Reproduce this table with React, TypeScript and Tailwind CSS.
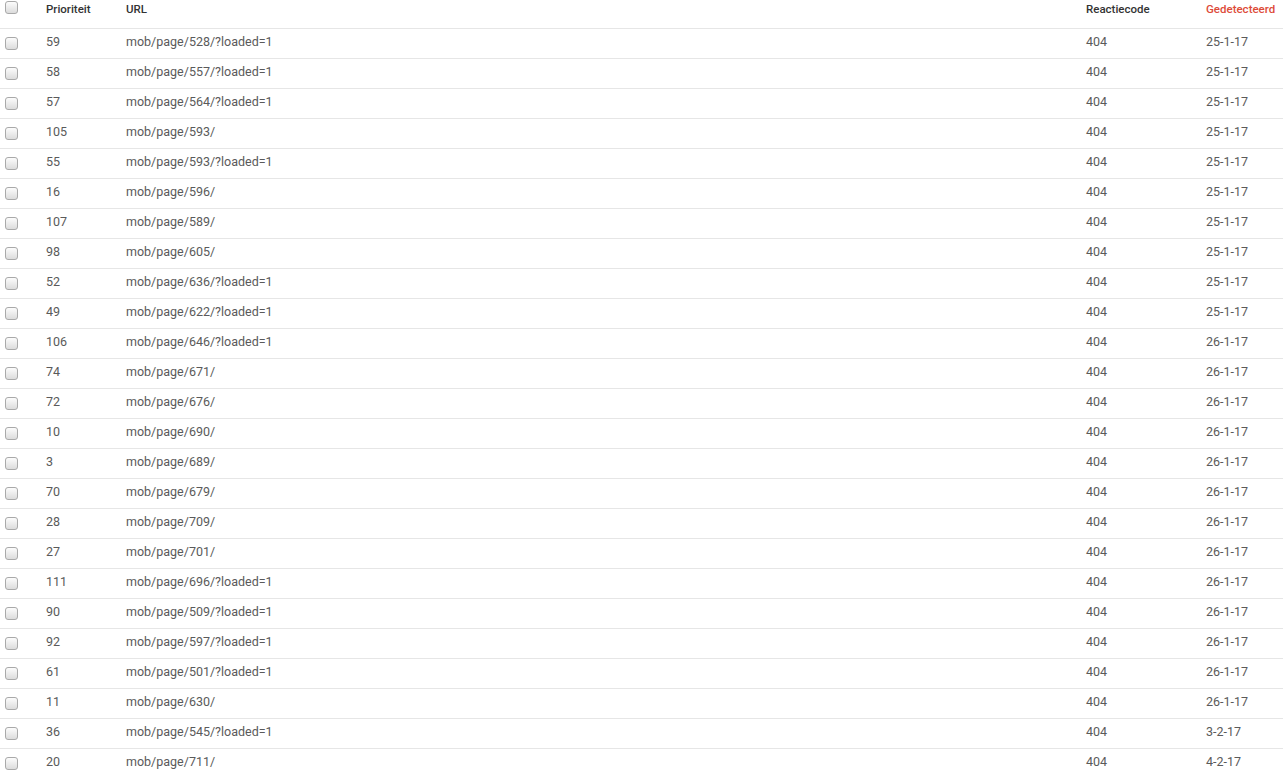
const rows: [string, string, string][] = [
  ["59", "mob/page/528/?loaded=1", "25-1-17"],
  ["58", "mob/page/557/?loaded=1", "25-1-17"],
  ["57", "mob/page/564/?loaded=1", "25-1-17"],
  ["105", "mob/page/593/", "25-1-17"],
  ["55", "mob/page/593/?loaded=1", "25-1-17"],
  ["16", "mob/page/596/", "25-1-17"],
  ["107", "mob/page/589/", "25-1-17"],
  ["98", "mob/page/605/", "25-1-17"],
  ["52", "mob/page/636/?loaded=1", "25-1-17"],
  ["49", "mob/page/622/?loaded=1", "25-1-17"],
  ["106", "mob/page/646/?loaded=1", "26-1-17"],
  ["74", "mob/page/671/", "26-1-17"],
  ["72", "mob/page/676/", "26-1-17"],
  ["10", "mob/page/690/", "26-1-17"],
  ["3", "mob/page/689/", "26-1-17"],
  ["70", "mob/page/679/", "26-1-17"],
  ["28", "mob/page/709/", "26-1-17"],
  ["27", "mob/page/701/", "26-1-17"],
  ["111", "mob/page/696/?loaded=1", "26-1-17"],
  ["90", "mob/page/509/?loaded=1", "26-1-17"],
  ["92", "mob/page/597/?loaded=1", "26-1-17"],
  ["61", "mob/page/501/?loaded=1", "26-1-17"],
  ["11", "mob/page/630/", "26-1-17"],
  ["36", "mob/page/545/?loaded=1", "3-2-17"],
  ["20", "mob/page/711/", "4-2-17"],
];

function Box() {
  return (
    <span className="block w-[13px] h-[13px] rounded-[3px] border border-[#a9a9a9] bg-gradient-to-b from-[#fcfcfc] to-[#dcdcdc]" />
  );
}

const cols = "grid grid-cols-[46px_80px_960px_120px_1fr]";

export default function App() {
  return (
    <div className="w-[1283px] h-[774px] overflow-hidden bg-white font-['Roboto',sans-serif]">
      {/* header */}
      <div className={`${cols} h-[29px] items-start pt-[1px] border-b border-[#e6e6e6] text-[11.5px] font-medium text-[#333]`}>
        <div className="pl-[5px]">
          <Box />
        </div>
        <div className="pt-[1px] leading-[14px]">Prioriteit</div>
        <div className="pt-[1px] leading-[14px]">URL</div>
        <div className="pt-[1px] leading-[14px]">Reactiecode</div>
        <div className="pt-[1px] leading-[14px] text-[#dd4b39]">Gedetecteerd</div>
      </div>

      {rows.map(([prio, url, date], i) => (
        <div
          key={i}
          className={`${cols} h-[30px] items-center border-b border-[#e6e6e6] text-[12.5px] leading-[16px] text-[#5a5a5a]`}
        >
          <div className="pl-[5px] pb-[1px]">
            <Box />
          </div>
          <div className="pb-[3px]">{prio}</div>
          <div className="pb-[3px]">{url}</div>
          <div className="pb-[3px]">404</div>
          <div className="pb-[3px]">{date}</div>
        </div>
      ))}
    </div>
  );
}
